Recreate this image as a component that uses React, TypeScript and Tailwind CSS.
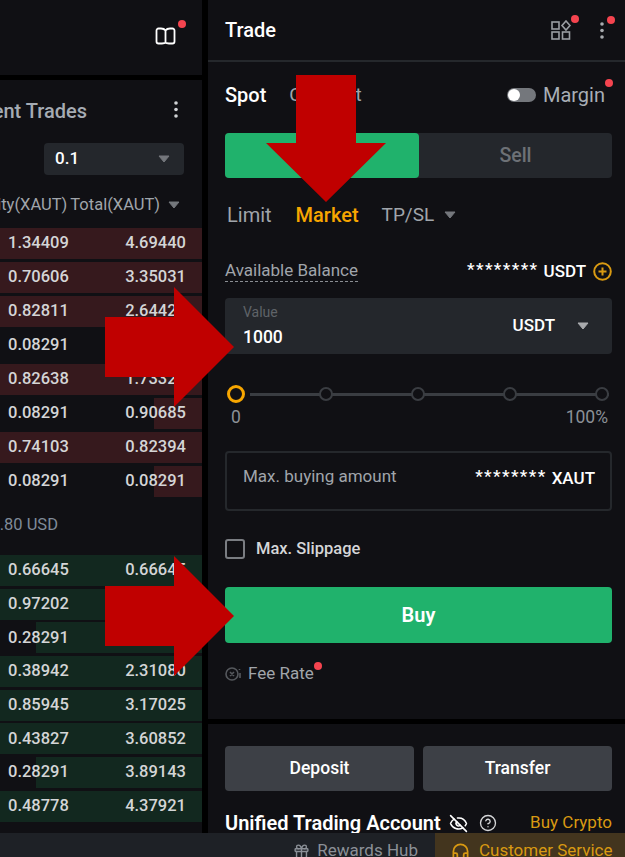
import { CircleHelp, EyeOff, Gift, Headphones } from "lucide-react";

const asks = [
  { qty: "1.34409", total: "4.69440", depth: 202 },
  { qty: "0.70606", total: "3.35031", depth: 202 },
  { qty: "0.82811", total: "2.64425", depth: 202 },
  { qty: "0.08291", total: "1.81614", depth: 48 },
  { qty: "0.82638", total: "1.73323", depth: 202 },
  { qty: "0.08291", total: "0.90685", depth: 48 },
  { qty: "0.74103", total: "0.82394", depth: 202 },
  { qty: "0.08291", total: "0.08291", depth: 48 },
];

const bids = [
  { qty: "0.66645", total: "0.66645", depth: 202 },
  { qty: "0.97202", total: "1.63847", depth: 202 },
  { qty: "0.28291", total: "1.92138", depth: 166 },
  { qty: "0.38942", total: "2.31080", depth: 202 },
  { qty: "0.85945", total: "3.17025", depth: 202 },
  { qty: "0.43827", total: "3.60852", depth: 202 },
  { qty: "0.28291", total: "3.89143", depth: 166 },
  { qty: "0.48778", total: "4.37921", depth: 202 },
];

function Caret({ className }: { className: string }) {
  return (
    <svg width="12" height="8" viewBox="0 0 12 8" className={className}>
      <path d="M1 1h10L6 7z" fill="currentColor" stroke="currentColor" strokeLinejoin="round" />
    </svg>
  );
}

function Dot({ className }: { className: string }) {
  return <span className={`absolute h-2 w-2 rounded-full bg-[#f5444f] ${className}`} />;
}

function Stars() {
  return <span className="-translate-y-[2px] text-[17px] tracking-[1.4px]">********</span>;
}

function BookRow({ qty, total, depth, color }: { qty: string; total: string; depth: number; color: string }) {
  return (
    <div className="relative flex h-[31px] items-center justify-between pl-2 pr-4 text-[16.5px] font-medium text-[#d4d5d6]">
      <div className={`absolute inset-y-0 right-0 ${color}`} style={{ width: depth }} />
      <span className="relative">{qty}</span>
      <span className="relative">{total}</span>
    </div>
  );
}

function Knob() {
  return <span className="h-[14px] w-[14px] shrink-0 rounded-full border-2 border-[#3a3d42] bg-[#101014]" />;
}

export default function App() {
  return (
    <div className="relative flex h-[857px] w-[625px] flex-col overflow-hidden bg-black font-['Roboto',sans-serif] text-[#a0a5ab]">
      <div className="flex h-[833px] gap-[6px]">
        {/* order book column */}
        <div className="flex w-[202px] flex-col gap-[5px]">
          <div className="relative flex h-[75px] items-center justify-end bg-[#101014] pb-[4px] pr-[26px]">
            <svg width="21" height="18" viewBox="0 0 21 18" fill="none" stroke="#fff" strokeWidth="1.8">
              <path d="M10.5 3.5C9.5 2 8 1.5 6 1.5H3.5a2 2 0 0 0-2 2v11a2 2 0 0 0 2 2H7c1.5 0 2.8 0 3.5-.8.7.8 2 .8 3.5.8h3.5a2 2 0 0 0 2-2v-11a2 2 0 0 0-2-2H15c-2 0-3.5.5-4.5 2zM10.5 3.5v12.7" />
            </svg>
            <Dot className="right-4 top-5" />
          </div>

          <div className="flex flex-1 flex-col overflow-hidden bg-[#101014]">
            <div className="flex h-[63px] shrink-0 items-center justify-between pr-6">
              <div className="flex w-[87px] justify-end overflow-hidden whitespace-nowrap pb-[2px] text-[20px] font-medium text-[#a5abb3]">
                Recent Trades
              </div>
              <svg width="4" height="17" viewBox="0 0 4 17" fill="#d0d2d5" className="mb-[4px]">
                <circle cx="2" cy="2" r="1.8" />
                <circle cx="2" cy="8.5" r="1.8" />
                <circle cx="2" cy="15" r="1.8" />
              </svg>
            </div>
            <div className="ml-[44px] flex h-8 w-[140px] shrink-0 items-center justify-between rounded bg-[#24272c] pl-[11px] pr-[14px] text-[17px] font-medium text-white">
              0.1
              <Caret className="text-[#74777c]" />
            </div>
            <div className="flex h-[53px] shrink-0 items-center justify-end pr-[22px] pt-[7px] text-[16.5px] text-[#a0a5ab]">
              <div className="flex w-[161px] justify-end gap-[3px] overflow-hidden whitespace-nowrap">
                <span>Quantity(XAUT)</span>
                <span>Total(XAUT)</span>
              </div>
              <Caret className="ml-2 text-[#74777c]" />
            </div>
            <div className="flex shrink-0 flex-col gap-[3px]">
              {asks.map((row, i) => (
                <BookRow key={i} {...row} color="bg-[#36191d]" />
              ))}
            </div>
            <div className="flex h-[58px] shrink-0 items-center justify-end pb-[2px] pr-[144px] text-[16.5px] text-[#7f8b99]">
              <span className="whitespace-nowrap">.80 USD</span>
            </div>
            <div className="flex shrink-0 flex-col gap-[2.7px]">
              {bids.map((row, i) => (
                <BookRow key={i} {...row} color="bg-[#12281f]" />
              ))}
            </div>
          </div>
        </div>

        {/* trade column */}
        <div className="flex flex-1 flex-col gap-[5px]">
          <div className="flex h-[719px] flex-col bg-[#101014] pl-[17px] pr-[13px]">
            <div className="relative -ml-[17px] -mr-[13px] flex h-[62px] shrink-0 items-center justify-between border-b-2 border-[#25282c] pl-[17px] pr-[21px]">
              <span className="text-[20px] font-medium text-white">Trade</span>
              <div className="flex items-center gap-[29px]">
                <svg width="20" height="20" viewBox="0 0 20 20" fill="none" stroke="#9a9da2" strokeWidth="1.6">
                  <rect x="1" y="2" width="7" height="7" />
                  <rect x="1" y="12" width="7" height="7" />
                  <rect x="11.5" y="12" width="7" height="7" />
                  <path d="M15 1l4 4.5-4 4.5-4-4.5z" />
                </svg>
                <svg width="4" height="17" viewBox="0 0 4 17" fill="#a8abaf">
                  <circle cx="2" cy="2" r="1.8" />
                  <circle cx="2" cy="8.5" r="1.8" />
                  <circle cx="2" cy="15" r="1.8" />
                </svg>
              </div>
              <Dot className="right-[46px] top-[15px]" />
              <Dot className="right-[10px] top-[16px]" />
            </div>

            <div className="relative mt-[19px] flex h-7 shrink-0 items-center">
              <span className="text-[20px] font-medium text-white">Spot</span>
              <span className="ml-[23px] text-[19px] text-[#a0a5ab]">Contract</span>
              <span className="ml-auto mr-[7px] flex h-[14px] w-[29px] items-center rounded-full bg-[#74777c] pl-[1px]">
                <span className="h-3 w-3 rounded-full bg-white" />
              </span>
              <span className="mr-[7px] text-[20px] text-[#a8aeb6]">Margin</span>
              <Dot className="right-[-1px] top-[-2px]" />
            </div>

            <div className="mt-[24px] flex h-[45px] shrink-0 rounded bg-[#24272c] text-[19.5px] font-medium">
              <div className="flex flex-1 items-center justify-center rounded bg-[#20b26c] text-white">Buy</div>
              <div className="flex w-[193px] items-center justify-center text-[#6d7176]">Sell</div>
            </div>

            <div className="mt-[25px] flex h-6 shrink-0 items-center pl-[2px] text-[20px]">
              <span className="text-[#a0a5ab]">Limit</span>
              <span className="ml-[24px] font-medium text-[#f7a600]">Market</span>
              <span className="ml-[23px] text-[19px] text-[#a0a5ab]">TP/SL</span>
              <Caret className="ml-[10px] text-[#74777c]" />
            </div>

            <div className="mt-[32px] flex h-[27px] shrink-0 items-start justify-between">
              <span className="border-b border-dashed border-[#8a8e93] text-[17px] leading-[22px] text-[#a0a5ab]">
                Available Balance
              </span>
              <span className="flex items-center gap-[7px] text-[17px] font-medium text-white">
                <span className="flex gap-[5px]">
                  <Stars />
                  USDT
                </span>
                <svg width="19" height="19" viewBox="0 0 19 19" fill="none" stroke="#d99a12" strokeWidth="2">
                  <circle cx="9.5" cy="9.5" r="8.3" />
                  <path d="M9.5 5.5v8M5.5 9.5h8" />
                </svg>
              </span>
            </div>

            <div className="mt-[12px] flex h-[56px] shrink-0 items-center justify-between rounded bg-[#24272c] pl-[18px] pr-[23px]">
              <div className="flex flex-col">
                <span className="text-[14px] leading-[16px] text-[#5f6368]">Value</span>
                <span className="mt-[5px] text-[17.5px] font-medium leading-[24px] text-white">1000</span>
              </div>
              <div className="flex items-center gap-[22px] pb-[1px] text-[17px] font-medium text-white">
                USDT
                <Caret className="text-[#a8aaad]" />
              </div>
            </div>

            <div className="mt-[31px] flex h-[18px] shrink-0 items-center pl-[2px]">
              <span className="h-[18px] w-[18px] shrink-0 rounded-full border-[3px] border-[#f7a600]" />
              <div className="ml-[5px] flex w-fit items-center gap-[78px] bg-[linear-gradient(#3a3d42,#3a3d42)] bg-[length:100%_3px] bg-center bg-no-repeat pl-[69px]">
                <Knob />
                <Knob />
                <Knob />
                <Knob />
              </div>
            </div>
            <div className="mt-[4px] flex h-5 shrink-0 items-center justify-between pl-[6px] pr-[4px] text-[17.5px] text-[#8b9097]">
              <span>0</span>
              <span>100%</span>
            </div>

            <div className="mt-[24px] flex h-[60px] shrink-0 justify-between rounded border-2 border-[#25282c] pl-4 pr-[15px] pt-[11px]">
              <span className="text-[17px] text-[#a0a5ab]">Max. buying amount</span>
              <span className="flex gap-[5px] pt-[2px] text-[17px] font-medium text-white">
                <Stars />
                XAUT
              </span>
            </div>

            <div className="mt-[28px] flex h-5 shrink-0 items-center gap-[11px]">
              <span className="h-5 w-5 rounded-[3px] border-2 border-[#7a7d82]" />
              <span className="text-[16.5px] font-medium text-[#d5d6d8]">Max. Slippage</span>
            </div>

            <div className="mt-[28px] flex h-[56px] shrink-0 items-center justify-center rounded bg-[#20b26c] text-[20px] font-semibold text-white">
              Buy
            </div>

            <div className="relative mt-[21px] flex h-5 shrink-0 items-center gap-[7px] text-[17px] text-[#a0a5ab]">
              <svg width="16" height="16" viewBox="0 0 16 16" fill="none" stroke="#55585d" strokeWidth="1.6">
                <circle cx="7" cy="8" r="6" />
                <path d="M5 6l4 4M9 6l-4 4M14.5 3v1M15 7v5" />
              </svg>
              Fee Rate
              <Dot className="left-[89px] top-[-2px]" />
            </div>
          </div>

          <div className="flex flex-1 flex-col overflow-hidden bg-[#101014] pl-[17px] pr-[13px] pt-[22px]">
            <div className="flex h-[45px] shrink-0 gap-[9px] text-[17.5px] font-medium text-white">
              <div className="flex flex-1 items-center justify-center rounded bg-[#3d4046]">Deposit</div>
              <div className="flex flex-1 items-center justify-center rounded bg-[#3d4046]">Transfer</div>
            </div>
            <div className="mt-[20px] flex h-6 shrink-0 items-center">
              <span className="whitespace-nowrap text-[20px] font-semibold text-white">Unified Trading Account</span>
              <EyeOff size={19} strokeWidth={2} className="ml-2 text-white" />
              <CircleHelp size={18} strokeWidth={1.8} className="ml-[11px] text-[#d5d6d8]" />
              <span className="ml-auto text-[17px] text-[#d99a12]">Buy Crypto</span>
            </div>
          </div>
        </div>
      </div>

      <div className="flex h-6 items-start justify-end bg-[#1e2126] text-[17px]">
        <div className="flex h-full items-center gap-[7px] pr-[17px] pt-[12px] text-[#8b9097]">
          <Gift size={17} className="text-[#8b9097]" />
          Rewards Hub
        </div>
        <div className="flex h-full w-[190px] items-center gap-[9px] bg-[#43351e] pl-4 pt-[12px] text-[#d99a12]">
          <Headphones size={19} strokeWidth={2.2} />
          <span className="whitespace-nowrap">Customer Service</span>
        </div>
      </div>

      {/* red annotation arrows */}
      <svg width="120" height="127" viewBox="0 0 120 127" className="absolute left-[266px] top-[75px]">
        <path d="M30 0h60v68h30l-60 59-60-59h30z" fill="#c00000" />
      </svg>
      <svg width="129" height="120" viewBox="0 0 129 120" className="absolute left-[105px] top-[287px]">
        <path d="M0 30h69V0l60 60-60 60V90H0z" fill="#c00000" />
      </svg>
      <svg width="129" height="120" viewBox="0 0 129 120" className="absolute left-[105px] top-[556px]">
        <path d="M0 30h69V0l60 60-60 60V90H0z" fill="#c00000" />
      </svg>
    </div>
  );
}
